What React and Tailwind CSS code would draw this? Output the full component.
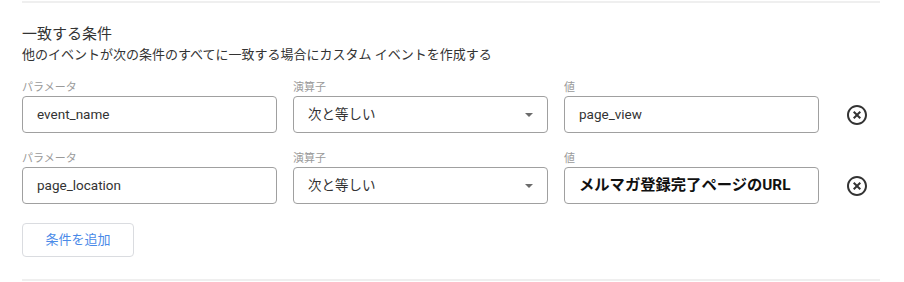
const jp = { fontFamily: 'Roboto, "Noto Sans CJK JP", sans-serif' };

function Field({ label, children, className = "" }) {
  return (
    <div className="flex w-[255px] flex-col">
      <div className="mb-px h-[14px] text-[11px] leading-[14px] text-[#9a9a9a]">{label}</div>
      <div
        className={
          "flex h-[37px] items-center rounded-[4px] border border-[#a0a0a0] bg-white px-[14px] " +
          className
        }
      >
        {children}
      </div>
    </div>
  );
}

function ClearIcon() {
  return (
    <svg width="24" height="24" viewBox="0 0 24 24" fill="#333333">
      <path d="M14.59 8L12 10.59 9.41 8 8 9.41 10.59 12 8 14.59 9.41 16 12 13.41 14.59 16 16 14.59 13.41 12 16 9.41 14.59 8zM12 2C6.47 2 2 6.47 2 12s4.47 10 10 10 10-4.47 10-10S17.53 2 12 2zm0 18c-4.41 0-8-3.59-8-8s3.59-8 8-8 8 3.59 8 8-3.59 8-8 8z" />
    </svg>
  );
}

function Row({ param, value, bold }) {
  return (
    <div className="flex items-end gap-4">
      <Field label="パラメータ">
        <span className="text-[13.5px] text-[#333]">{param}</span>
      </Field>
      <Field label="演算子" className="justify-between">
        <span className="text-[13.5px] text-[#333]">次と等しい</span>
        <svg width="8" height="4" viewBox="0 0 8 4">
          <path d="M0 0l4 4 4-4z" fill="#6b6b6b" />
        </svg>
      </Field>
      <Field label="値">
        {bold ? (
          <span className="text-[15.3px] font-bold text-[#111]">{value}</span>
        ) : (
          <span className="text-[13.5px] text-[#333]">{value}</span>
        )}
      </Field>
      <div className="ml-[10px] flex h-[37px] items-center">
        <ClearIcon />
      </div>
    </div>
  );
}

export default function App() {
  return (
    <div className="h-[282px] w-[904px] overflow-hidden bg-white px-[22px] pt-px" style={jp}>
      <div className="h-[2px] w-[858px] bg-[#efefef]" />

      {/* heading */}
      <h2 className="mt-[21px] text-[15px] leading-[20px] text-[#333]">一致する条件</h2>
      <p className="mt-[2px] text-[13px] leading-[18px] text-[#333]">
        他のイベントが次の条件のすべてに一致する場合にカスタム イベントを作成する
      </p>

      <div className="mt-[17px] flex flex-col gap-[19px]">
        <Row param="event_name" value="page_view" />
        <Row param="page_location" value="メルマガ登録完了ページのURL" bold />
      </div>

      <button className="mt-[19px] flex h-[34px] w-[112px] items-center justify-center rounded-[4px] border border-[#dadce0] bg-white text-[13px] text-[#4a8ae8]">
        条件を追加
      </button>

      <div className="mt-[22px] h-[2px] w-[858px] bg-[#efefef]" />
    </div>
  );
}
